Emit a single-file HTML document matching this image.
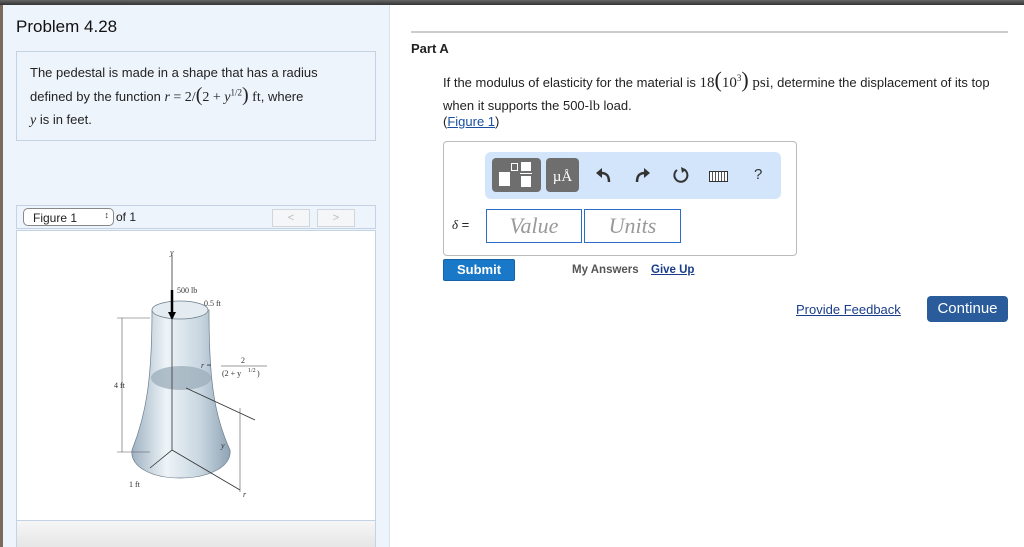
<!DOCTYPE html>
<html><head><meta charset="utf-8"><style>
*{margin:0;padding:0;box-sizing:border-box}
body{width:1024px;height:547px;overflow:hidden;background:#fff;font-family:"Liberation Sans",Arial,sans-serif;position:relative;color:#222}
.a{position:absolute;white-space:nowrap}
.m{font-family:"Liberation Serif",serif}
.l{line-height:16px;font-size:13px}
</style></head><body>
<div class="a" style="left:0;top:0;width:1024px;height:5px;background:linear-gradient(#666,#333)"></div>
<div class="a" style="left:0;top:5px;width:3px;height:542px;background:#7a6a5a"></div>
<div class="a" style="left:3px;top:5px;width:387px;height:542px;background:#eef4fb;border-right:1px solid #d6e2ee"></div>
<div class="a" style="left:16px;top:17px;font-size:17px;color:#111">Problem 4.28</div>
<div class="a" style="left:16px;top:51px;width:360px;height:90px;border:1px solid #c3d3e3;background:#eef4fb"></div>
<div class="a l" style="left:30px;top:65px">The pedestal is made in a shape that has a radius</div>
<div class="a l" style="left:30px;top:89px">defined by the function <span class="m" style="font-size:14px"><i>r</i> = 2/<span style="font-size:20px;line-height:10px">(</span>2 + <i>y</i><sup style="font-size:9px;line-height:0">1/2</sup><span style="font-size:20px;line-height:10px">)</span> ft</span>, where</div>
<div class="a l" style="left:30px;top:112px"><i class="m" style="font-size:14px">y</i> is in feet.</div>
<div class="a" style="left:16px;top:205px;width:360px;height:24px;border:1px solid #c3d3e3;background:#eef4fb"></div>
<div class="a" style="left:23px;top:208px;width:91px;height:18px;border:1px solid #888;border-radius:5px;background:#fff;font-size:12px;padding:2px 0 0 9px">Figure 1<span style="position:absolute;right:4px;top:1px;font-size:9px">&#8597;</span></div>
<div class="a" style="left:116px;top:210px;font-size:12px">of 1</div>
<div class="a" style="left:272px;top:209px;width:38px;height:18px;border:1px solid #d0d6dc;background:#f4f6f8;color:#bbb;font-size:11px;text-align:center;line-height:16px">&lt;</div>
<div class="a" style="left:317px;top:209px;width:38px;height:18px;border:1px solid #d0d6dc;background:#f4f6f8;color:#bbb;font-size:11px;text-align:center;line-height:16px">&gt;</div>
<div class="a" style="left:16px;top:230px;width:360px;height:317px;border:1px solid #c3d3e3;background:#fff"></div>
<div class="a" style="left:17px;top:520px;width:358px;height:27px;background:linear-gradient(#f6f6f6,#e6e6e6);border-top:1px solid #c3d3e3"></div>
<svg class="a" style="left:17px;top:231px" width="358" height="288" viewBox="17 231 358 288">
<defs><linearGradient id="g" x1="0" x2="1"><stop offset="0" stop-color="#9fb2c2"/><stop offset=".35" stop-color="#eef4f8"/><stop offset=".7" stop-color="#c8d6e0"/><stop offset="1" stop-color="#8fa3b4"/></linearGradient></defs>
<path d="M152,310 C152,380 146,415 132,450 C130,466 150,478 180,478 C210,478 232,466 230,450 C214,415 209,380 209,310 Z" fill="url(#g)" stroke="#6a7c8a" stroke-width=".7"/>
<ellipse cx="180" cy="310" rx="28" ry="9" fill="#e4ecf2" stroke="#6a7c8a" stroke-width=".7"/>
<ellipse cx="181" cy="378" rx="30" ry="12" fill="#9fb0bd" opacity=".8"/>
<path d="M172,255 V450 L150,468 M172,450 L240,490 M186,388 L255,420" stroke="#333" stroke-width=".8" fill="none"/>
<path d="M172,290 V318" stroke="#000" stroke-width="2.5"/><path d="M168,312 L172,320 L176,312Z"/>
<path d="M122,318 V452 M117,318 H150 M117,452 H150 M240,408 V492" stroke="#555" stroke-width=".6"/>
<g font-family="Liberation Serif" font-size="8" fill="#333"><text x="170" y="255" font-style="italic">y</text><text x="177" y="293">500 lb</text><text x="204" y="306">0.5 ft</text><text x="114" y="388">4 ft</text><text x="129" y="487">1 ft</text><text x="201" y="368" font-style="italic">r =</text><text x="241" y="363">2</text><text x="222" y="376">(2 + y</text><text x="248" y="372" font-size="6">1/2</text><text x="257" y="376">)</text><text x="221" y="448" font-style="italic">y</text><text x="243" y="497" font-style="italic">r</text></g>
<path d="M221,366 H267" stroke="#333" stroke-width=".5"/>
</svg>
<div class="a" style="left:411px;top:31px;width:597px;height:2px;background:#ccc"></div>
<div class="a" style="left:411px;top:41px;font-size:13px;font-weight:bold">Part A</div>
<div class="a l" style="left:443px;top:75px;font-size:13px">If the modulus of elasticity for the material is <span class="m" style="font-size:15px">18<span style="font-size:22px;line-height:10px">(</span>10<sup style="font-size:9px;line-height:0">3</sup><span style="font-size:22px;line-height:10px">)</span> psi</span>, determine the displacement of its top</div>
<div class="a l" style="left:443px;top:98px;font-size:13px">when it supports the 500-<span class="m" style="font-size:14px">lb</span> load.</div>
<div class="a l" style="left:443px;top:114px;font-size:13px">(<span style="color:#1a4fa0;text-decoration:underline">Figure 1</span>)</div>
<div class="a" style="left:443px;top:141px;width:354px;height:115px;border:1px solid #bbb;border-radius:4px"></div>
<div class="a" style="left:485px;top:152px;width:296px;height:47px;background:#d2e5fb;border-radius:6px"></div>
<div class="a" style="left:492px;top:158px;width:49px;height:34px;background:#6e6e6e;border-radius:4px"></div>
<div class="a" style="left:499px;top:172px;width:11px;height:14px;background:#fff"></div>
<div class="a" style="left:511px;top:163px;width:7px;height:8px;border:1px solid #fff"></div>
<div class="a" style="left:521px;top:162px;width:10px;height:9px;background:#fff"></div>
<div class="a" style="left:520px;top:173px;width:12px;height:1px;background:#fff"></div>
<div class="a" style="left:521px;top:176px;width:10px;height:11px;background:#fff"></div>
<div class="a m" style="left:546px;top:158px;width:33px;height:34px;background:#6e6e6e;border-radius:4px;color:#fff;font-size:15px;text-align:center;line-height:38px">µÅ</div>
<svg class="a" style="left:595px;top:166px" width="18" height="18" viewBox="0 0 18 18"><path d="M14,16 C14,9 11,7 6,7" fill="none" stroke="#333" stroke-width="2.5"/><path d="M1,7 L7,2 L7,12Z" fill="#333"/></svg>
<svg class="a" style="left:633px;top:166px" width="18" height="18" viewBox="0 0 18 18"><path d="M4,16 C4,9 7,7 12,7" fill="none" stroke="#333" stroke-width="2.5"/><path d="M17,7 L11,2 L11,12Z" fill="#333"/></svg>
<svg class="a" style="left:672px;top:166px" width="18" height="18" viewBox="0 0 18 18"><path d="M12,3.5 A6.5,6.5 0 1 1 5,4" fill="none" stroke="#333" stroke-width="2"/><path d="M9,1 L14,3.5 L10,7Z" fill="#333"/></svg>
<div class="a" style="left:709px;top:171px;width:19px;height:11px;border:1px solid #333;background:repeating-linear-gradient(90deg,#fff 0 2px,#555 2px 3px)"></div>
<div class="a" style="left:754px;top:166px;font-size:15px;color:#333">?</div>
<div class="a" style="left:452px;top:217px;font-size:13px"><i class="m">δ</i> =</div>
<div class="a m" style="left:486px;top:209px;width:96px;height:34px;border:1px solid #2d6cc9;color:#999;font-style:italic;font-size:22px;text-align:center;line-height:32px">Value</div>
<div class="a m" style="left:584px;top:209px;width:97px;height:34px;border:1px solid #2d6cc9;color:#999;font-style:italic;font-size:22px;text-align:center;line-height:32px">Units</div>
<div class="a" style="left:443px;top:259px;width:72px;height:22px;background:#1a78c9;border:1px solid #1462a8;border-radius:2px;color:#fff;font-weight:bold;font-size:13px;text-align:center;line-height:20px">Submit</div>
<div class="a" style="left:572px;top:264px;font-size:11.5px;font-weight:bold;color:#555">My Answers</div>
<div class="a" style="left:651px;top:264px;font-size:11.5px;font-weight:bold;color:#1a3c8a;text-decoration:underline">Give Up</div>
<div class="a" style="left:796px;top:302px;font-size:13px;color:#1a3c8a;text-decoration:underline">Provide Feedback</div>
<div class="a" style="left:927px;top:296px;width:81px;height:26px;background:#2a5c9c;border-radius:4px;color:#fff;font-size:15px;text-align:center;line-height:25px">Continue</div>
</body></html>
